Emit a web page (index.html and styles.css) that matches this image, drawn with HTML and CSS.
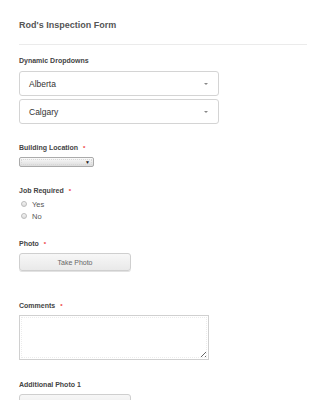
FILE: index.html
```html
<!DOCTYPE html>
<html lang="en">
<head>
  <meta charset="UTF-8">
  <meta name="viewport" content="width=device-width, initial-scale=1.0">
  <title>Rod's Inspection Form</title>
  <link rel="stylesheet" href="styles.css">
</head>
<body>
  <div class="form">
    <header class="form-header">
      <h1>Rod's Inspection Form</h1>
    </header>

    <div class="field field-dynamic">
      <label class="label">Dynamic Dropdowns</label>
      <div class="dropdown"><span>Alberta</span><i class="caret"></i></div>
      <div class="dropdown"><span>Calgary</span><i class="caret"></i></div>
    </div>

    <div class="field">
      <label class="label">Building Location <span class="req">*</span></label>
      <div class="mini-select"><span class="mini-arrow">&#9660;</span></div>
    </div>

    <div class="field field-radio">
      <label class="label">Job Required <span class="req">*</span></label>
      <div class="radio-row"><span class="radio"></span>Yes</div>
      <div class="radio-row"><span class="radio"></span>No</div>
    </div>

    <div class="field field-photo">
      <label class="label">Photo <span class="req">*</span></label>
      <button class="btn" type="button">Take Photo</button>
    </div>

    <div class="field field-comments">
      <label class="label">Comments <span class="req">*</span></label>
      <textarea class="comments"></textarea>
    </div>

    <div class="field">
      <label class="label">Additional Photo 1</label>
      <button class="btn" type="button">Select Image</button>
    </div>
  </div>
</body>
</html>
```

FILE: styles.css
```css
body {
  font-family: "Liberation Sans", Arial, sans-serif;
  background-color: #fff;
  color: #444;
  margin: 0;
  padding: 0;
}
.form {
  padding-left: 19px;
  width: 288px;
}
.form-header {
  padding: 19px 0 13px;
  border-bottom: 1px solid #ebebeb;
  margin-bottom: 11px;
}
.form-header h1 {
  margin: 0;
  font-size: 9px;
  line-height: 12px;
  font-weight: bold;
  color: #555;
}
.field {
  margin-bottom: 19px;
}
.field-radio {
  margin-bottom: 17px;
}
.field-photo {
  margin-bottom: 30px;
}
.field-comments {
  margin-bottom: 20px;
}
.label {
  display: block;
  font-size: 7px;
  line-height: 10px;
  font-weight: bold;
  color: #444;
  margin-bottom: 4px;
}
.field-dynamic .label {
  margin-bottom: 5px;
}
.field-radio .label {
  margin-bottom: 2px;
}
.req {
  color: #e33;
  font-size: 6px;
  vertical-align: top;
  margin-left: 3px;
}
.dropdown {
  box-sizing: border-box;
  width: 200px;
  height: 25px;
  border: 1px solid #d4d4d4;
  border-radius: 3px;
  display: flex;
  align-items: center;
  justify-content: space-between;
  padding: 0 10px 0 9px;
  font-size: 8.5px;
  color: #333;
  margin-bottom: 3px;
}
.caret {
  width: 0;
  height: 0;
  border-left: 2px solid transparent;
  border-right: 2px solid transparent;
  border-top: 2px solid #888;
}
.mini-select {
  box-sizing: border-box;
  width: 75px;
  height: 10px;
  border: 1px solid #aaa;
  border-radius: 2px;
  background: linear-gradient(#fbfbfb, #dcdcdc);
  outline: 1px dotted #d8d8d8;
  outline-offset: -3px;
  display: flex;
  justify-content: flex-end;
  align-items: center;
  padding-right: 3px;
}
.mini-arrow {
  font-size: 5px;
  color: #222;
  line-height: 5px;
}
.radio-row {
  display: flex;
  align-items: center;
  height: 12px;
  font-size: 7.5px;
  color: #555;
  padding-left: 2px;
}
.radio {
  box-sizing: border-box;
  width: 6px;
  height: 6px;
  border: 1px solid #bbb;
  border-radius: 50%;
  background: linear-gradient(#f4f4f4, #ddd);
  margin-right: 5px;
}
.btn {
  display: block;
  box-sizing: border-box;
  width: 112px;
  height: 18px;
  border: 1px solid #cfcfcf;
  border-radius: 3px;
  background: linear-gradient(#f7f7f7, #e9e9e9);
  box-shadow: 0 1px 0 #e2e2e2;
  font-family: "Liberation Sans", Arial, sans-serif;
  font-size: 7px;
  color: #666;
  padding: 0;
}
.comments {
  display: block;
  box-sizing: border-box;
  width: 190px;
  height: 45px;
  border: 1px solid #d0d0d0;
  outline: 1px dotted #ececec;
  outline-offset: -3px;
  margin: 0;
  resize: both;
}
```
